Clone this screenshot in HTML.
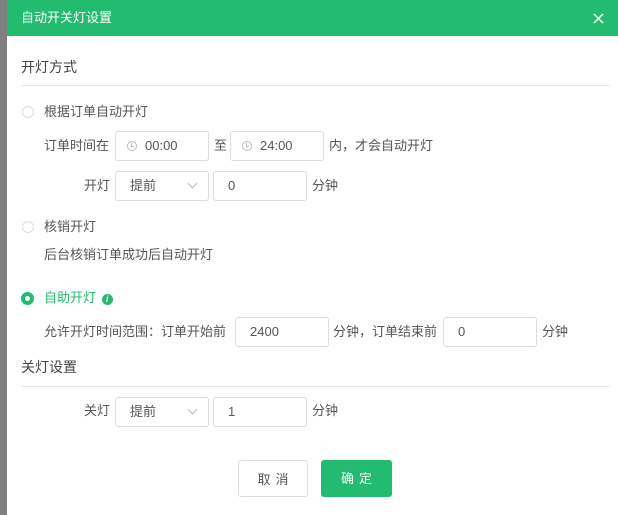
<!DOCTYPE html>
<html><head><meta charset="utf-8"><style>
*{box-sizing:border-box;margin:0;padding:0}
body{width:618px;height:515px;overflow:hidden;background:#7f7f7f;font-family:"Liberation Sans","Noto Sans CJK SC",sans-serif;font-size:13px;color:#555;position:relative}
.m{position:absolute;left:7px;top:0;width:620px;height:515px;background:#fff}
.hd{position:absolute;left:7px;top:0;width:611px;height:36px;background:#22bb70;color:#fff;font-size:13px;line-height:36px;padding-left:14px}
.x{position:absolute;right:14px;top:13px;width:11px;height:11px}
.a{position:absolute;white-space:nowrap;line-height:16px}
.t{font-size:14px;color:#444}
.ln{position:absolute;left:21px;width:589px;height:1px;background:#e6e6e6}
.in{position:absolute;height:30px;border:1px solid #dcdcdc;border-radius:3px;background:#fff;line-height:28px;padding-left:14px;color:#555;font-size:13px}
.r{position:absolute;left:22px;width:12px;height:12px;border:1px solid #dcdcdc;border-radius:50%}
.ck{position:absolute;left:21px;width:13px;height:13px;border-radius:50%;background:#22bb70}
.ck:after{content:"";position:absolute;left:4px;top:4px;width:5px;height:5px;background:#fff;border-radius:50%}
.clk{display:inline-block;width:10px;height:10px;border:1px solid #bbb;border-radius:50%;margin-right:8px;vertical-align:-1px;position:relative}
.clk:after{content:"";position:absolute;left:3px;top:1px;width:2px;height:3px;border-left:1px solid #bbb;border-bottom:1px solid #bbb}
.chev{position:absolute;right:12px;top:8px;width:7px;height:7px;border-right:1px solid #bbb;border-bottom:1px solid #bbb;transform:rotate(45deg)}
.btn{position:absolute;top:460px;height:37px;border-radius:3px;line-height:37px;text-align:center;font-size:13px;letter-spacing:5px}
</style></head><body>
<div class="m"></div>
<div class="hd">自动开关灯设置<svg class="x" viewBox="0 0 11 11"><path d="M1 1L10 10M10 1L1 10" stroke="#fff" stroke-width="1.5"/></svg></div>
<div class="a t" style="left:21px;top:59px">开灯方式</div>
<div class="ln" style="top:85px"></div>
<div class="r" style="top:106px"></div>
<div class="a" style="left:44px;top:104px">根据订单自动开灯</div>
<div class="a" style="left:44px;top:138px">订单时间在</div>
<div class="in" style="left:115px;top:131px;width:94px;padding-left:11px"><span class="clk"></span>00:00</div>
<div class="a" style="left:214px;top:138px">至</div>
<div class="in" style="left:230px;top:131px;width:94px;padding-left:11px"><span class="clk"></span>24:00</div>
<div class="a" style="left:329px;top:138px">内，才会自动开灯</div>
<div class="a" style="left:84px;top:178px">开灯</div>
<div class="in" style="left:115px;top:171px;width:94px">提前<span class="chev"></span></div>
<div class="in" style="left:213px;top:171px;width:94px">0</div>
<div class="a" style="left:312px;top:178px">分钟</div>
<div class="r" style="top:221px"></div>
<div class="a" style="left:44px;top:219px">核销开灯</div>
<div class="a" style="left:44px;top:247px">后台核销订单成功后自动开灯</div>
<div class="ck" style="top:292px"></div>
<div class="a" style="left:44px;top:290px;color:#22bb70">自助开灯 <span style="display:inline-block;width:11px;height:11px;border-radius:50%;background:#22bb70;color:#fff;font-size:9px;line-height:11px;text-align:center;font-style:italic;font-weight:bold;vertical-align:0;margin-left:2px">i</span></div>
<div class="a" style="left:44px;top:324px">允许开灯时间范围：订单开始前</div>
<div class="in" style="left:235px;top:317px;width:94px">2400</div>
<div class="a" style="left:333px;top:324px">分钟，订单结束前</div>
<div class="in" style="left:443px;top:317px;width:94px">0</div>
<div class="a" style="left:542px;top:324px">分钟</div>
<div class="a t" style="left:21px;top:359px">关灯设置</div>
<div class="ln" style="top:386px"></div>
<div class="a" style="left:84px;top:403px">关灯</div>
<div class="in" style="left:115px;top:397px;width:94px">提前<span class="chev"></span></div>
<div class="in" style="left:213px;top:397px;width:94px">1</div>
<div class="a" style="left:312px;top:403px">分钟</div>
<div class="btn" style="left:238px;width:70px;border:1px solid #dcdcdc;color:#555;padding-left:5px">取消</div>
<div class="btn" style="left:321px;width:71px;background:#22bb70;color:#fff;padding-left:5px">确定</div>
</body></html>
